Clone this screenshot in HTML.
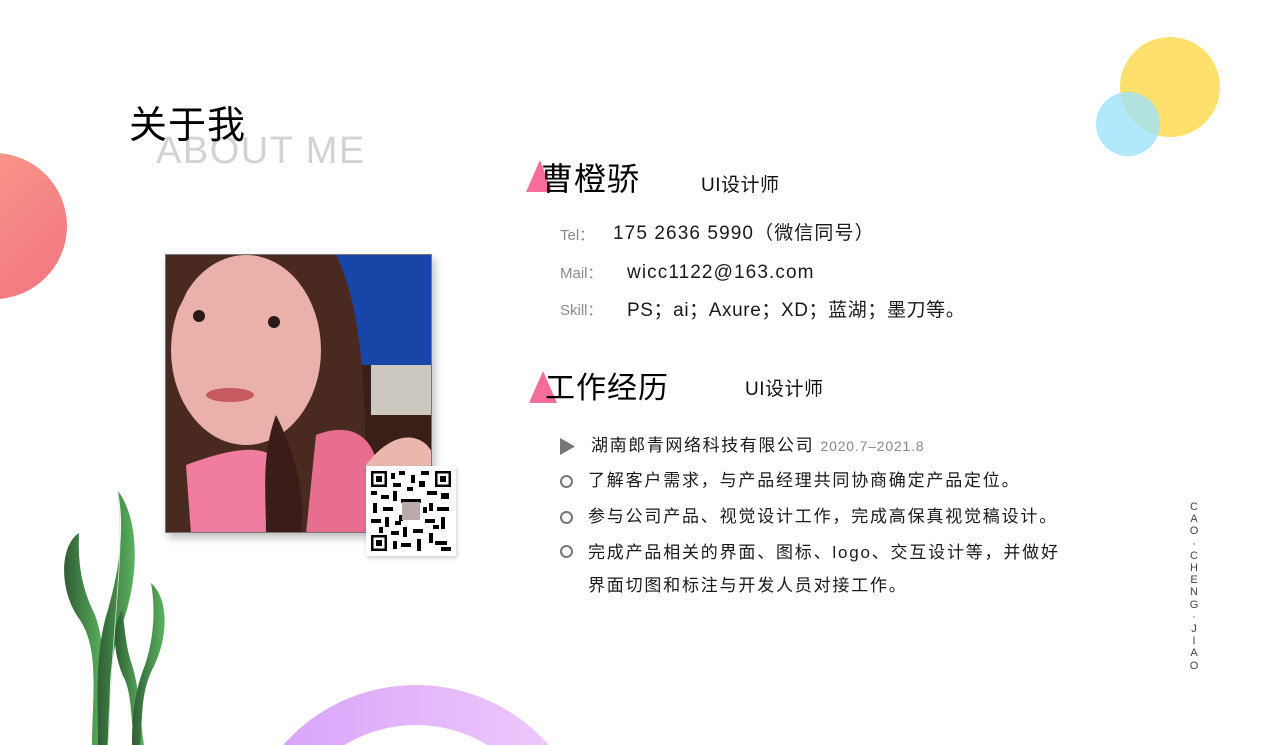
<!DOCTYPE html>
<html><head><meta charset="utf-8"><style>
*{margin:0;padding:0;box-sizing:border-box}
body{width:1280px;height:745px;overflow:hidden;background:#fff;position:relative;font-family:"Liberation Sans","Noto Sans CJK SC",sans-serif;color:#111}
.a{position:absolute;white-space:nowrap;line-height:1}
.lab{font-size:15px;color:#8a8a8a}
.val{font-size:19px;color:#1a1a1a;letter-spacing:1.1px}
.li{font-size:17px;color:#1a1a1a;letter-spacing:1.8px}
.circ{position:absolute;width:13px;height:13px;border:2px solid #777;border-radius:50%}
</style></head><body>
<svg class="a" style="left:0;top:0" width="1280" height="745">
<defs>
<linearGradient id="rg" x1="0" y1="0" x2="1" y2="1"><stop offset="0" stop-color="#fba08a"/><stop offset="1" stop-color="#f27482"/></linearGradient>
<linearGradient id="pg" x1="0" y1="0" x2="1" y2="0"><stop offset="0" stop-color="#d8a2fb"/><stop offset="1" stop-color="#eecbfb"/></linearGradient>
<linearGradient id="gg" x1="0" y1="0" x2="1" y2="0"><stop offset="0" stop-color="#2f5d34"/><stop offset="1" stop-color="#5bb35f"/></linearGradient>
</defs>
<circle cx="-6" cy="226" r="73" fill="url(#rg)"/>
<circle cx="1170" cy="87" r="50" fill="#ffe06c"/>
<circle cx="1128" cy="124" r="32" fill="#9fe2fb" opacity="0.8"/>
<circle cx="416" cy="862" r="157" fill="none" stroke="url(#pg)" stroke-width="40"/>
<path d="M79,533 C60,545 58,590 80,620 C100,650 92,700 92,745 L102,745 C104,700 108,650 95,615 C80,585 78,560 79,533Z" fill="url(#gg)"/>
<path d="M118,491 C140,520 140,580 120,630 C105,670 112,710 108,745 L98,745 C98,700 95,660 105,620 C120,570 125,530 118,491Z" fill="url(#gg)"/>
<path d="M122,610 C110,630 115,660 125,680 C133,700 130,725 136,745 L144,745 C140,720 140,690 132,665 C125,645 125,625 122,610Z" fill="url(#gg)"/>
<path d="M151,583 C170,600 168,640 152,670 C140,695 143,720 140,745 L132,745 C132,715 135,690 145,665 C155,635 155,605 151,583Z" fill="url(#gg)"/>
<path d="M118,495 C125,560 112,620 108,745" stroke="#cfe8cf" stroke-width="0.8" fill="none"/>
<polygon points="540,160 526,192 552,192" fill="#f56d98"/>
<polygon points="543,371 529,403 557,403" fill="#f56d98"/>
<polygon points="560,438 575,446.5 560,455" fill="#777"/>
</svg>

<div class="a" style="left:129px;top:107px;font-size:38px;letter-spacing:1px;color:#000;z-index:2">关于我</div>
<div class="a" style="left:156px;top:132px;font-size:38px;letter-spacing:1.5px;color:#d3d3d3;z-index:1">ABOUT ME</div>

<div class="a" style="left:165px;top:254px;width:267px;height:279px;border:1px solid #777;box-shadow:3px 5px 8px rgba(0,0,0,.25);overflow:hidden;background:#3a1f18">
<svg width="267" height="279">
<rect x="170" y="0" width="100" height="110" fill="#1846a8"/>
<rect x="205" y="110" width="62" height="50" fill="#ccc8c0"/>
<path d="M0,0 L170,0 C200,60 200,160 200,279 L0,279Z" fill="#4a2a20"/>
<ellipse cx="80" cy="95" rx="75" ry="95" fill="#e9b1a9"/>
<path d="M0,70 C30,40 20,0 60,0 L0,0Z" fill="#4a2a20"/>
<path d="M20,210 C60,195 90,190 105,200 L110,279 L25,279Z" fill="#f07d9f"/>
<path d="M150,180 C200,160 230,200 200,279 L140,279Z" fill="#e86e90"/>
<path d="M110,160 C130,200 140,240 135,279 L100,279 C100,240 95,200 110,160Z" fill="#3a1d18"/>
<path d="M200,210 C230,170 260,180 267,200 L267,279 L210,279Z" fill="#e9b7ae"/>
<circle cx="33" cy="61" r="6" fill="#2a1a18"/><circle cx="108" cy="67" r="6" fill="#2a1a18"/>
<ellipse cx="64" cy="140" rx="24" ry="7" fill="#c65a5e"/>
</svg></div>
<div class="a" style="left:366px;top:466px;width:90px;height:90px;background:#fff;box-shadow:1px 2px 4px rgba(0,0,0,.2)">
<svg width="80" height="80" style="position:absolute;left:5px;top:5px" viewBox="0 0 80 80">
<g fill="#000">
<rect x="0" y="0" width="16" height="16"/><rect x="64" y="0" width="16" height="16"/><rect x="0" y="64" width="16" height="16"/>
</g><g fill="#fff"><rect x="2.5" y="2.5" width="11" height="11"/><rect x="66.5" y="2.5" width="11" height="11"/><rect x="2.5" y="66.5" width="11" height="11"/></g>
<g fill="#000"><rect x="5" y="5" width="6" height="6"/><rect x="69" y="5" width="6" height="6"/><rect x="5" y="69" width="6" height="6"/>
<rect x="20" y="2" width="4" height="6"/><rect x="28" y="0" width="6" height="4"/><rect x="40" y="4" width="4" height="8"/><rect x="50" y="0" width="8" height="4"/><rect x="22" y="12" width="8" height="4"/><rect x="48" y="10" width="6" height="6"/>
<rect x="0" y="20" width="6" height="4"/><rect x="10" y="24" width="8" height="4"/><rect x="22" y="20" width="4" height="10"/><rect x="56" y="20" width="10" height="4"/><rect x="70" y="22" width="8" height="6"/><rect x="2" y="32" width="4" height="10"/><rect x="12" y="36" width="10" height="4"/>
<rect x="58" y="32" width="4" height="8"/><rect x="66" y="36" width="12" height="4"/><rect x="0" y="48" width="10" height="4"/><rect x="14" y="46" width="4" height="10"/><rect x="24" y="50" width="6" height="4"/><rect x="54" y="48" width="10" height="4"/><rect x="70" y="46" width="4" height="12"/>
<rect x="20" y="60" width="8" height="4"/><rect x="32" y="56" width="4" height="10"/><rect x="42" y="58" width="10" height="4"/><rect x="58" y="62" width="4" height="10"/><rect x="22" y="70" width="4" height="8"/><rect x="30" y="72" width="10" height="4"/><rect x="46" y="68" width="4" height="12"/><rect x="64" y="70" width="12" height="4"/><rect x="70" y="76" width="10" height="4"/><rect x="30" y="28" width="20" height="4"/><rect x="28" y="44" width="4" height="6"/>
<rect x="36" y="16" width="6" height="4"/><rect x="8" y="56" width="4" height="6"/><rect x="62" y="54" width="6" height="4"/><rect x="52" y="36" width="4" height="6"/>
</g>
<rect x="31" y="31" width="18" height="18" fill="#b9a9a8"/>
</svg></div>

<div class="a" style="left:541px;top:163px;font-size:32px;letter-spacing:1px;color:#000">曹橙骄</div>
<div class="a" style="left:701px;top:176px;font-size:19px;letter-spacing:0.5px">UI设计师</div>
<div class="a lab" style="left:560px;top:228px">Tel：</div>
<div class="a val" style="left:613px;top:224px">175 2636 5990（微信同号）</div>
<div class="a lab" style="left:560px;top:266px">Mail：</div>
<div class="a val" style="left:627px;top:263px">wicc1122@163.com</div>
<div class="a lab" style="left:560px;top:303px">Skill：</div>
<div class="a val" style="left:627px;top:301px;letter-spacing:0.6px">PS；ai；Axure；XD；蓝湖；墨刀等。</div>

<div class="a" style="left:545px;top:374px;font-size:30px;letter-spacing:1px;color:#000">工作经历</div>
<div class="a" style="left:745px;top:380px;font-size:19px;letter-spacing:0.5px">UI设计师</div>

<div class="a li" style="left:591px;top:437px;letter-spacing:1.6px">湖南郎青网络科技有限公司 <span style="font-size:14px;color:#888;letter-spacing:0.8px">2020.7–2021.8</span></div>
<div class="circ" style="left:560px;top:475px"></div>
<div class="a li" style="left:588px;top:472px">了解客户需求，与产品经理共同协商确定产品定位。</div>
<div class="circ" style="left:560px;top:511px"></div>
<div class="a li" style="left:588px;top:508px">参与公司产品、视觉设计工作，完成高保真视觉稿设计。</div>
<div class="circ" style="left:560px;top:545px"></div>
<div class="a li" style="left:588px;top:544px">完成产品相关的界面、图标、logo、交互设计等，并做好</div>
<div class="a li" style="left:588px;top:577px">界面切图和标注与开发人员对接工作。</div>

<div class="a" style="left:1188px;top:501px;width:12px;font-size:11px;color:#444;line-height:12.2px;text-align:center;white-space:normal">C<br>A<br>O<br>·<br>C<br>H<br>E<br>N<br>G<br>·<br>J<br>I<br>A<br>O</div>
</body></html>
